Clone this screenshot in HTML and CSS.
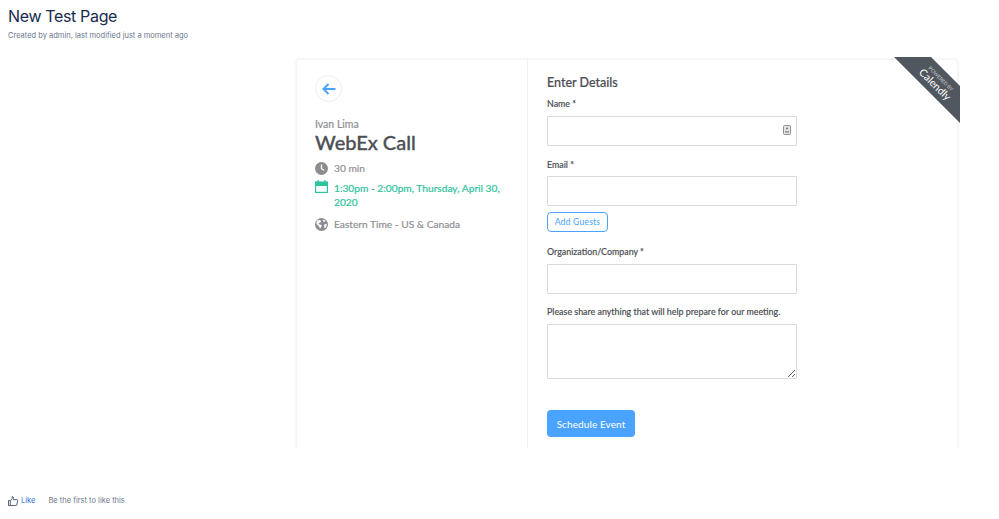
FILE: index.html
```html
<!DOCTYPE html>
<html lang="en">
<head>
    <meta charset="UTF-8">
    <title>New Test Page</title>
    <link rel="stylesheet" href="styles.css">
</head>
<body>
    <header class="page-header">
        <h1>New Test Page</h1>
        <p class="byline">Created by admin, last modified just a moment ago</p>
    </header>

    <div class="booking-card">
        <div class="ribbon">
            <div class="ribbon-text">
                <span class="ribbon-small">POWERED BY</span>
                <span class="ribbon-brand">Calendly</span>
            </div>
        </div>

        <section class="event-pane">
            <button class="back-button" type="button" aria-label="Back">
                <svg width="14" height="12" viewBox="0 0 14 12" fill="none" stroke="#4aa3ff" stroke-width="2">
                    <path d="M13.5 6H1.500M6.500 1 1.500 6l5 5"/>
                </svg>
            </button>
            <p class="host">Ivan Lima</p>
            <h2 class="event-name">WebEx Call</h2>
            <div class="detail">
                <svg class="detail-icon" width="13" height="13" viewBox="0 0 13 13">
                    <circle cx="6.5" cy="6.5" r="6.5" fill="#8c8c91"/>
                    <path d="M6.5 2.5v4.2l2.6 1.6" fill="none" stroke="#fff" stroke-width="1.3"/>
                </svg>
                <span>30 min</span>
            </div>
            <div class="detail detail-date">
                <svg class="detail-icon calendar-icon" width="13" height="13" viewBox="0 0 13 13" fill="none" stroke="#2ec4a0" stroke-width="1.2">
                    <rect x="0.6" y="2" width="11.8" height="10.4"/>
                    <path d="M0.6 2.5h11.8v2.8H0.6z" fill="#2ec4a0"/>
                    <path d="M3.2 0v2.5M9.8 0v2.5"/>
                </svg>
                <span>1:30pm - 2:00pm, Thursday, April 30, 2020</span>
            </div>
            <div class="detail detail-zone">
                <svg class="detail-icon" width="13" height="13" viewBox="0 0 13 13">
                    <circle cx="6.5" cy="6.5" r="6.5" fill="#8c8c91"/>
                    <path d="M2 2.6 5.2 2l1 1.4-1.2 1.3-1.6.3.9 1.6 2.3.5-.3 2-1.3 1.5-1.1-2.4L1.4 5.800zM8.200 1.500l2.300 1.300-1 1.200-1.500-.7zM9 6.500l2.800-.4-.5 3-1.700 1.400z" fill="#fff"/>
                </svg>
                <span>Eastern Time - US &amp; Canada</span>
            </div>
        </section>

        <section class="form-pane">
            <h3 class="form-title">Enter Details</h3>
            <form>
                <label class="field-label label-name" for="name">Name *</label>
                <div class="input-wrap">
                    <input class="text-input" type="text" id="name">
                    <svg class="contact-icon" width="8" height="10" viewBox="0 0 8 10">
                        <rect x="0.5" y="0.5" width="7" height="9" rx="1" fill="#e4e4e4" stroke="#8f8f8f"/>
                        <circle cx="4" cy="3.600" r="1" fill="#777"/>
                        <path d="M2 7.500h4V6.300H2z" fill="#777"/>
                    </svg>
                </div>

                <label class="field-label" for="email">Email *</label>
                <input class="text-input" type="email" id="email">
                <button class="guests-button" type="button">Add Guests</button>

                <label class="field-label label-org" for="org">Organization/Company *</label>
                <input class="text-input input-org" type="text" id="org">

                <label class="field-label label-notes" for="notes">Please share anything that will help prepare for our meeting.</label>
                <textarea class="text-area" id="notes"></textarea>

                <button class="schedule-button" type="button">Schedule Event</button>
            </form>
        </section>
    </div>

    <footer class="like-bar">
        <svg width="10" height="10" viewBox="0 0 11 11" fill="none" stroke="#42526e" stroke-width="1">
            <path d="M0.500 5h2v5.500h-2zM2.500 5.200 4.600 2.800V0.600c1.200 0 1.700.9 1.500 2L5.800 4h4c.6 0 .9.500.8 1l-.8 4.600c-.1.500-.4.900-1 .9H2.500"/>
        </svg>
        <a class="like-link" href="#">Like</a>
        <span class="like-note">Be the first to like this</span>
    </footer>
</body>
</html>
```

FILE: styles.css
```css
/* Page */
body {
  margin: 0;
  height: 519px;
  overflow: hidden;
  background-color: #fff;
  font-family: "Lato", sans-serif;
}

.page-header {
  padding: 6px 8px 0;
  height: 59px;
  box-sizing: border-box;
}

h1 {
  margin: 0;
  font-family: "Inter", sans-serif;
  font-size: 16px;
  line-height: 21px;
  font-weight: 400;
  letter-spacing: -0.35px;
  color: #172b4d;
}

.byline {
  margin: 3px 0 0;
  font-family: "Inter", sans-serif;
  font-size: 7.5px;
  line-height: 12px;
  color: #6b778c;
}

/* Booking card, cut off at the bottom like the embed frame */
.booking-card {
  position: relative;
  display: flex;
  width: 662px;
  height: 389px;
  margin-left: 296px;
  box-sizing: border-box;
  border: 1px solid #f4f4f4;
  border-bottom: none;
  border-radius: 4px 4px 0 0;
  box-shadow: 0 0 3px rgba(0, 0, 0, 0.08);
  clip-path: inset(-5px -5px 0 -5px);
}

.event-pane {
  width: 231px;
  box-sizing: border-box;
  padding: 15px 18px 0;
  border-right: 1px solid #f2f2f2;
}

.back-button {
  display: flex;
  align-items: center;
  justify-content: center;
  width: 27px;
  height: 27px;
  padding: 0;
  background: #fff;
  border: 1px solid #ececec;
  border-radius: 50%;
}

.host {
  margin: 15px 0 0;
  font-size: 10.5px;
  line-height: 14px;
  color: #8f8f94;
  -webkit-text-stroke: 0.2px;
}

.event-name {
  margin: -2px 0 0;
  font-size: 20px;
  line-height: 26px;
  font-weight: 500;
  color: #4d5055;
  -webkit-text-stroke: 0.3px;
}

.detail {
  display: flex;
  gap: 6px;
  margin-top: 6px;
  font-size: 10.2px;
  line-height: 14px;
  color: #8f8f94;
  -webkit-text-stroke: 0.2px;
}

.detail-date {
  color: #2ec4a0;
}

.detail-zone {
  margin-top: 8px;
}

.detail-icon {
  flex: none;
  margin-top: 1px;
}

.calendar-icon {
  margin-top: -1px;
}

/* Form */
.form-pane {
  flex: 1;
  padding: 15px 0 0 19px;
}

.form-title {
  margin: 0;
  font-size: 12.5px;
  line-height: 16px;
  font-weight: 500;
  color: #4d5055;
  -webkit-text-stroke: 0.2px;
}

form {
  display: flex;
  flex-direction: column;
  align-items: flex-start;
}

.field-label {
  display: block;
  margin-top: 13px;
  font-size: 8.85px;
  line-height: 12px;
  font-weight: 500;
  color: #4d5055;
  -webkit-text-stroke: 0.15px;
}

.label-name {
  margin-top: 7px;
}

.label-org {
  margin-top: 14px;
}

.label-notes {
  margin-top: 12px;
}

.input-wrap {
  position: relative;
  margin-top: 6px;
}

.text-input {
  display: block;
  width: 250px;
  height: 30px;
  margin-top: 5px;
  box-sizing: border-box;
  background: #fff;
  border: 1px solid #dadada;
  border-radius: 1px;
}

.input-wrap .text-input {
  margin-top: 0;
}

.input-org {
  margin-top: 6px;
}

.contact-icon {
  position: absolute;
  top: 9px;
  right: 6px;
}

.text-area {
  display: block;
  width: 250px;
  height: 55px;
  margin-top: 6px;
  box-sizing: border-box;
  background: #fff;
  border: 1px solid #dadada;
  border-radius: 1px;
}

.guests-button {
  height: 20px;
  width: 61px;
  margin-top: 6px;
  padding: 0;
  background: #fff;
  border: 1px solid #4aa3ff;
  border-radius: 4px;
  font-family: "Lato", sans-serif;
  font-size: 8.6px;
  font-weight: 400;
  color: #4aa3ff;
  letter-spacing: 0.2px;
}

.schedule-button {
  width: 88px;
  height: 27px;
  margin-top: 31px;
  padding: 0;
  background: #4aa3ff;
  border: none;
  border-radius: 4px;
  font-family: "Lato", sans-serif;
  font-size: 10px;
  font-weight: 400;
  letter-spacing: 0.1px;
  color: #fff;
}

/* Calendly corner ribbon */
.ribbon {
  position: absolute;
  top: -3px;
  right: -3px;
  width: 66px;
  height: 66px;
  background: #50575e;
  clip-path: polygon(0 0, 37px 0, 100% 29px, 100% 100%);
  overflow: hidden;
}

.ribbon-text {
  position: absolute;
  top: 17px;
  left: 10px;
  width: 66px;
  display: flex;
  flex-direction: column;
  align-items: center;
  transform: rotate(45deg);
  color: #fff;
}

.ribbon-small {
  font-size: 5px;
  line-height: 6px;
  color: #c9cdd0;
}

.ribbon-brand {
  font-size: 10.5px;
  line-height: 11px;
}

/* Like bar */
.like-bar {
  display: flex;
  align-items: center;
  margin-top: 47px;
  padding-left: 8px;
  font-family: "Inter", sans-serif;
  font-size: 7.5px;
  line-height: 12px;
}

.like-link {
  margin-left: 3px;
  color: #2f6fd6;
  text-decoration: none;
}

.like-note {
  margin-left: 13px;
  color: #6b778c;
}
```
